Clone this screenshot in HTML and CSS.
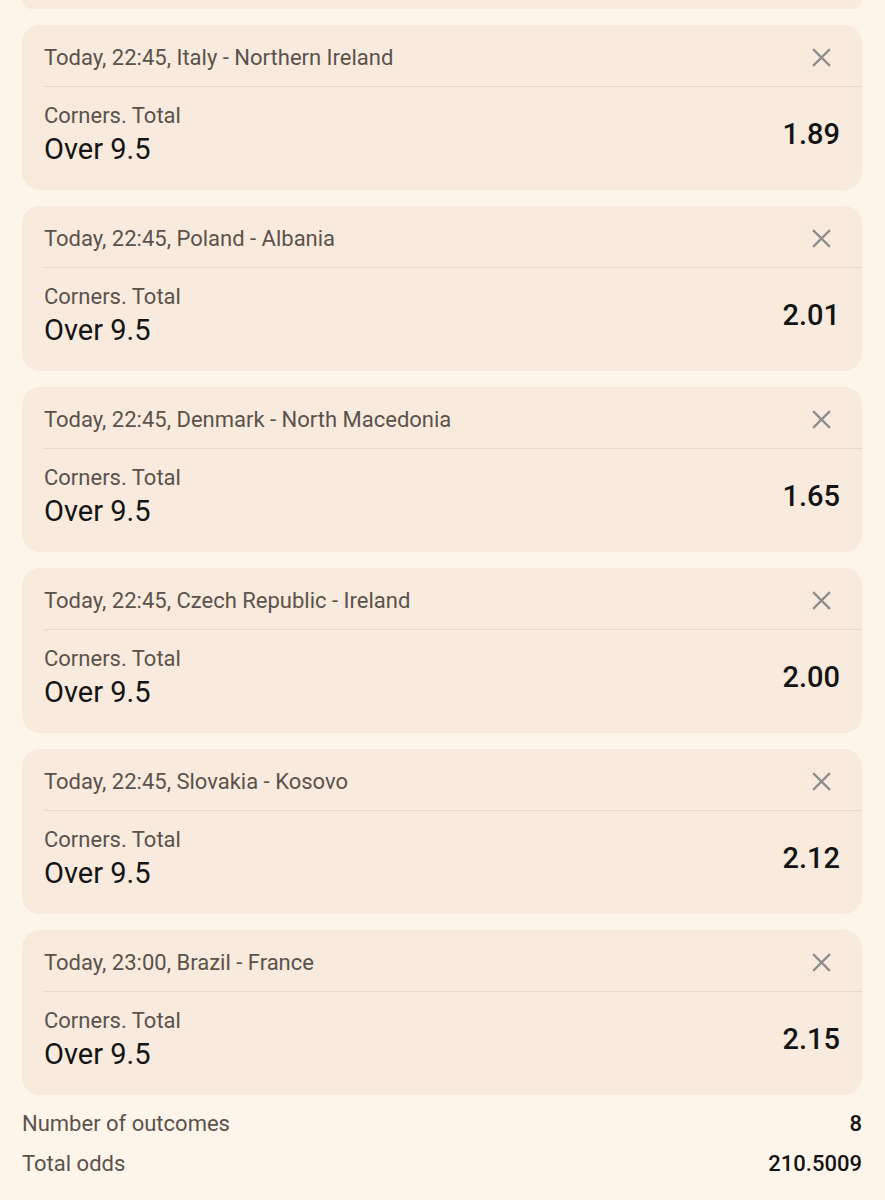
FILE: index.html
```html
<!DOCTYPE html>
<html>
<head>
<meta charset="utf-8">
<link rel="stylesheet" href="styles.css">
</head>
<body>
<div class="page">
  <div class="card-tail"></div>

  <div class="card">
    <div class="card-head">
      <span class="event">Today, 22:45, Italy - Northern Ireland</span>
      <svg class="close" viewBox="0 0 20 20"><path d="M2 2L18 18M18 2L2 18"/></svg>
    </div>
    <div class="card-body">
      <div class="bet">
        <div class="market">Corners. Total</div>
        <div class="outcome">Over 9.5</div>
      </div>
      <div class="odds">1.89</div>
    </div>
  </div>

  <div class="card">
    <div class="card-head">
      <span class="event">Today, 22:45, Poland - Albania</span>
      <svg class="close" viewBox="0 0 20 20"><path d="M2 2L18 18M18 2L2 18"/></svg>
    </div>
    <div class="card-body">
      <div class="bet">
        <div class="market">Corners. Total</div>
        <div class="outcome">Over 9.5</div>
      </div>
      <div class="odds">2.01</div>
    </div>
  </div>

  <div class="card">
    <div class="card-head">
      <span class="event">Today, 22:45, Denmark - North Macedonia</span>
      <svg class="close" viewBox="0 0 20 20"><path d="M2 2L18 18M18 2L2 18"/></svg>
    </div>
    <div class="card-body">
      <div class="bet">
        <div class="market">Corners. Total</div>
        <div class="outcome">Over 9.5</div>
      </div>
      <div class="odds">1.65</div>
    </div>
  </div>

  <div class="card">
    <div class="card-head">
      <span class="event">Today, 22:45, Czech Republic - Ireland</span>
      <svg class="close" viewBox="0 0 20 20"><path d="M2 2L18 18M18 2L2 18"/></svg>
    </div>
    <div class="card-body">
      <div class="bet">
        <div class="market">Corners. Total</div>
        <div class="outcome">Over 9.5</div>
      </div>
      <div class="odds">2.00</div>
    </div>
  </div>

  <div class="card">
    <div class="card-head">
      <span class="event">Today, 22:45, Slovakia - Kosovo</span>
      <svg class="close" viewBox="0 0 20 20"><path d="M2 2L18 18M18 2L2 18"/></svg>
    </div>
    <div class="card-body">
      <div class="bet">
        <div class="market">Corners. Total</div>
        <div class="outcome">Over 9.5</div>
      </div>
      <div class="odds">2.12</div>
    </div>
  </div>

  <div class="card">
    <div class="card-head">
      <span class="event">Today, 23:00, Brazil - France</span>
      <svg class="close" viewBox="0 0 20 20"><path d="M2 2L18 18M18 2L2 18"/></svg>
    </div>
    <div class="card-body">
      <div class="bet">
        <div class="market">Corners. Total</div>
        <div class="outcome">Over 9.5</div>
      </div>
      <div class="odds">2.15</div>
    </div>
  </div>

  <div class="summary">
    <div class="row"><span class="label">Number of outcomes</span><span class="value">8</span></div>
    <div class="row"><span class="label">Total odds</span><span class="value">210.5009</span></div>
  </div>
</div>
</body>
</html>
```

FILE: styles.css
```css
html, body {
  margin: 0;
  padding: 0;
  background: #fdf4ea;
}
body {
  font-family: Roboto, "Noto Sans", sans-serif;
}
.page {
  padding: 0 23px 0 22px;
  display: flex;
  flex-direction: column;
  gap: 16px;
}
.card-tail {
  height: 9px;
  background: #f8eadc;
  border-radius: 0 0 18px 18px;
}
.card {
  background: #f8eadc;
  border-radius: 18px;
  height: 165px;
  display: flex;
  flex-direction: column;
}
.card-head {
  height: 62px;
  margin-left: 22px;
  padding-right: 30px;
  padding-top: 3px;
  display: flex;
  align-items: center;
  justify-content: space-between;
  border-bottom: 1.5px solid #e6d8ca;
  box-sizing: border-box;
}
.event {
  font-size: 22px;
  color: #5b524b;
}
.close {
  width: 21px;
  height: 21px;
  fill: none;
  stroke: #8d8d8d;
  stroke-width: 2.1;
}
.card-body {
  display: flex;
  align-items: center;
  justify-content: space-between;
  padding: 14px 22px 0 22px;
}
.bet {
  display: flex;
  flex-direction: column;
}
.market {
  font-size: 22px;
  color: #5b524b;
  line-height: 30px;
}
.outcome {
  font-size: 29px;
  color: #141414;
  line-height: 36px;
}
.odds {
  font-size: 29px;
  font-weight: 500;
  color: #141414;
}
.summary {
  margin-top: -8px;
  display: flex;
  flex-direction: column;
}
.row {
  display: flex;
  justify-content: space-between;
  align-items: center;
  height: 40px;
}
.label {
  font-size: 22px;
  color: #5b524b;
}
.value {
  font-size: 22px;
  font-weight: 500;
  color: #141414;
}
```
